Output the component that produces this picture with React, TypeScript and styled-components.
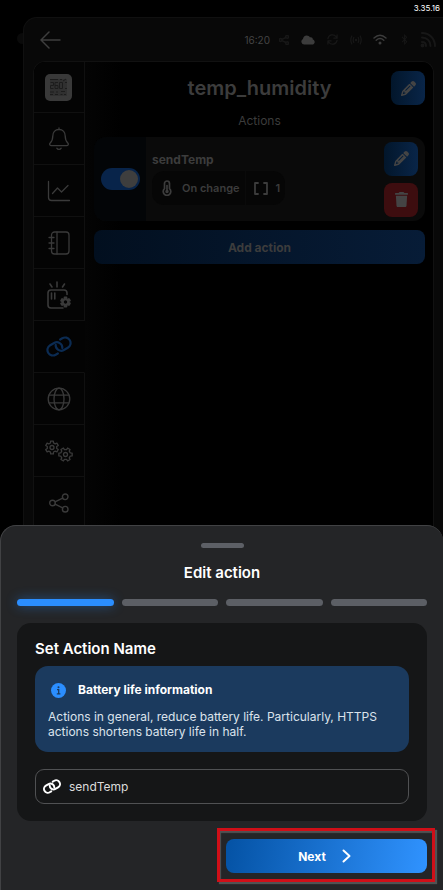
import React from "react";
import styled, { createGlobalStyle } from "styled-components";
import { FaTrash, FaBluetoothB, FaPencil } from "react-icons/fa6";

const GlobalStyle = createGlobalStyle`
  *, *::before, *::after { box-sizing: border-box; }
  body {
    margin: 0;
    background: #000;
    font-family: Inter, "Liberation Sans", sans-serif;
    font-size: 12px;
    overflow: hidden;
  }
  button, input { font: inherit; color: inherit; }
  button { cursor: pointer; }
  svg { display: block; flex: none; }
  h1, h2, h3, p, ol { margin: 0; padding: 0; }
`;

const Page = styled.div`
  position: relative;
  display: flex;
  flex-direction: column;
  height: 100vh;
  background: #000;
  overflow: hidden;
`;

const Version = styled.div`
  height: 17px;
  flex: none;
  padding-right: 3px;
  text-align: right;
  font-size: 8px;
  font-weight: 400;
  line-height: 17px;
  color: #fff;
`;

const Device = styled.div`
  position: relative;
  flex: 1;
  display: flex;
  flex-direction: column;
  margin-left: 23px;
  padding: 0 9px;
  background: #080808;
  border: solid #101010;
  border-width: 1px 0 0 1px;
  border-radius: 14px 0 0 0;
  color: #3c3c3c;
  &::before {
    content: "";
    position: absolute;
    left: -7px;
    top: 15px;
    width: 6px;
    height: 11px;
    border-radius: 6px 0 0 6px;
    background: #0a0a0a;
  }
`;

const TopBar = styled.header`
  display: flex;
  align-items: center;
  justify-content: space-between;
  height: 43px;
  flex: none;
  padding-left: 7px;
`;

const BackButton = styled.button`
  display: flex;
  padding: 0;
  border: 0;
  background: none;
  color: #3e3e3e;
`;

const Status = styled.div`
  display: flex;
  align-items: center;
  gap: 4px;
  font-size: 10px;
  font-weight: 400;
  color: #444;
  margin-right: -4px;
`;

const StatusIcon = styled.span<{ $on?: boolean }>`
  display: flex;
  justify-content: center;
  width: 20px;
  color: ${(p) => (p.$on ? "#3c3c3c" : "#171717")};
`;

const Panel = styled.div`
  flex: 1;
  display: flex;
  background: #000;
  border: solid #111;
  border-width: 1px 1px 0 1px;
  border-radius: 12px 12px 0 0;
  overflow: hidden;
`;

const SideBar = styled.nav`
  display: flex;
  flex-direction: column;
  width: 52px;
  flex: none;
  margin-left: -1px;
`;

const SideItem = styled.button<{ $active?: boolean }>`
  display: flex;
  align-items: center;
  justify-content: center;
  height: 52px;
  flex: none;
  padding: 0;
  border: solid #101010;
  border-width: 0 1px 1px 0;
  border-right-color: ${(p) => (p.$active ? "transparent" : "#101010")};
  background: ${(p) => (p.$active ? "#030303" : "#040404")};
  color: ${(p) => (p.$active ? "#0b2b52" : "#3a3a3a")};
  &:first-child {
    height: 51px;
  }
`;

const Main = styled.main`
  flex: 1;
  display: flex;
  flex-direction: column;
  padding: 9px 8px 0 9px;
  background: linear-gradient(90deg, #040404, #000 36px);
`;

const TitleRow = styled.div`
  display: grid;
  grid-template-columns: 34px 1fr 34px;
  align-items: center;
`;

const Title = styled.h1`
  grid-column: 2;
  text-align: center;
  font-size: 20px;
  line-height: 34px;
  font-weight: 600;
`;

const SubTitle = styled.p`
  margin: 7px 0 8px;
  text-align: center;
  font-size: 12px;
  line-height: 17px;
`;

const SquareButton = styled.button<{ $danger?: boolean }>`
  display: flex;
  align-items: center;
  justify-content: center;
  width: 34px;
  height: 34px;
  padding: 0;
  border: 0;
  border-radius: 8px;
  background: ${(p) =>
    p.$danger ? "#3d0d0f" : "linear-gradient(90deg, #02162b, #092548)"};
  color: #444;
`;

const ActionCard = styled.article`
  display: flex;
  height: 84px;
  border-radius: 12px;
  background: #0a0a0a;
  overflow: hidden;
`;

const ToggleCell = styled.label`
  display: flex;
  align-items: center;
  justify-content: center;
  width: 52px;
  background: #030507;
`;

const Toggle = styled.input`
  appearance: none;
  display: flex;
  align-items: center;
  justify-content: flex-end;
  width: 39px;
  height: 22px;
  margin: 0;
  padding: 2px;
  border-radius: 11px;
  background: #08244a;
  &::before {
    content: "";
    width: 18px;
    height: 18px;
    border-radius: 50%;
    background: #3e3e3e;
  }
  &:not(:checked) {
    justify-content: flex-start;
    background: #151515;
  }
`;

const ActionBody = styled.div`
  flex: 1;
  padding: 15px 6px 0;
`;

const ActionName = styled.h2`
  font-size: 12px;
  line-height: 16px;
  font-weight: 700;
`;

const Chips = styled.div`
  display: inline-flex;
  margin-top: 3px;
  border-radius: 12px;
  background: #060606;
  font-weight: 600;
  font-size: 11px;
`;

const Chip = styled.span`
  display: flex;
  align-items: center;
  gap: 10px;
  height: 34px;
  padding: 0 5px 0 10px;
  & + & {
    padding-left: 8px;
    gap: 8px;
    border-left: 1px solid #0a0a0a;
  }
`;

const CardButtons = styled.div`
  display: flex;
  flex-direction: column;
  justify-content: center;
  gap: 7px;
  padding-right: 7px;
`;

const AddButton = styled.button`
  height: 34px;
  margin-top: 9px;
  border: 0;
  border-radius: 8px;
  background: linear-gradient(90deg, #020f1f, #071c37);
  font-weight: 700;
  color: #3c3c3c;
`;

const Sheet = styled.section`
  position: absolute;
  left: 0;
  right: 0;
  bottom: 0;
  display: flex;
  flex-direction: column;
  padding: 17px 16px 8px;
  border: solid #414244;
  border-width: 1px 0 0 1px;
  border-radius: 16px 16px 0 0;
  background: #242527;
  color: #fff;
`;

const Handle = styled.div`
  align-self: center;
  width: 43px;
  height: 5px;
  border-radius: 3px;
  background: #5d6066;
`;

const SheetTitle = styled.h2`
  margin: 15px 0 16px;
  text-align: center;
  font-size: 15px;
  line-height: 20px;
  font-weight: 600;
`;

const Steps = styled.ol`
  display: grid;
  grid-template-columns: repeat(4, 1fr);
  gap: 8px;
  list-style: none;
`;

const Step = styled.li<{ $done?: boolean }>`
  height: 7px;
  border-radius: 4px;
  background: ${(p) => (p.$done ? "#2b8eff" : "#5c5f65")};
  box-shadow: ${(p) => (p.$done ? "0 0 12px rgba(43, 142, 255, 0.45)" : "none")};
`;

const FormCard = styled.div`
  display: flex;
  flex-direction: column;
  margin-top: 17px;
  padding: 16px 18px 17px;
  border-radius: 14px;
  background: #151617;
`;

const FormTitle = styled.h3`
  font-size: 15px;
  line-height: 20px;
  font-weight: 600;
`;

const Info = styled.div`
  margin: 7px 0 17px;
  padding: 14px 13px 13px;
  border-radius: 13px;
  background: #1b3a5e;
`;

const InfoHead = styled.div`
  display: flex;
  align-items: center;
  gap: 12px;
  padding-left: 3px;
  font-size: 12px;
  line-height: 20px;
  font-weight: 700;
`;

const InfoText = styled.p`
  margin-top: 9px;
  font-size: 12px;
  line-height: 15px;
  color: #dbe3ec;
`;

const Field = styled.label`
  display: flex;
  align-items: center;
  gap: 8px;
  height: 35px;
  padding: 0 8px 0 7px;
  border: 1px solid #505153;
  border-radius: 9px;
`;

const FieldInput = styled.input`
  flex: 1;
  min-width: 0;
  padding: 0;
  border: 0;
  outline: 0;
  background: none;
  font-size: 12px;
  color: #dcdcdc;
`;

const Highlight = styled.div`
  align-self: flex-end;
  margin: 7px -8px 0 0;
  padding: 8px 5px 6px 6px;
  border: 3px solid #d00f18;
  box-shadow: 2px 2px 1px #515253, inset 1px 2px 1px #515253;
`;

const NextButton = styled.button`
  display: flex;
  align-items: center;
  justify-content: center;
  gap: 16px;
  width: 201px;
  height: 34px;
  padding: 0 4px 0 0;
  border: 0;
  border-radius: 8px;
  background: linear-gradient(100deg, #0452a4, #3093ff);
  font-size: 12px;
  font-weight: 700;
  color: #fff;
`;

type IconProps = {
  w: number;
  h?: number;
  box: string;
  sw?: number;
  children: React.ReactNode;
};

const Stroke = ({ w, h = w, box, sw = 1.3, children }: IconProps) => (
  <svg
    width={w}
    height={h}
    viewBox={box}
    fill="none"
    stroke="currentColor"
    strokeWidth={sw}
    strokeLinecap="round"
    strokeLinejoin="round"
    aria-hidden="true"
  >
    {children}
  </svg>
);

const gearPath = (cx: number, cy: number, outer: number, inner: number, teeth: number, turn = 0) => {
  const points: string[] = [];
  const step = (Math.PI * 2) / teeth;
  for (let i = 0; i < teeth; i++) {
    const a = i * step + turn;
    [
      [inner, -0.3],
      [outer, -0.2],
      [outer, 0.2],
      [inner, 0.3],
    ].forEach(([r, f]) => {
      points.push(
        `${(cx + r * Math.cos(a + f * step)).toFixed(2)} ${(cy + r * Math.sin(a + f * step)).toFixed(2)}`
      );
    });
  }
  return `M${points.join("L")}Z`;
};

const chainHalf = "M-4.500 5.500H-7A5.500 5.500 0 0 1-7-5.500H-2.500A5.500 5.500 0 0 1 2.100 3";

const ChainIcon = ({ w, h, sw }: { w: number; h: number; sw: number }) => (
  <Stroke w={w} h={h} box="-13 -10.500 26 21" sw={sw}>
    <g transform="rotate(-30)">
      <path d={chainHalf} />
      <path d={chainHalf} transform="rotate(180)" />
    </g>
  </Stroke>
);

const DeviceThumb = () => (
  <svg width="27" height="27" viewBox="0 0 27 27" aria-hidden="true">
    <rect width="27" height="27" rx="5" fill="#393939" />
    <rect x="5" y="5" width="17" height="17" fill="#303030" />
    <g stroke="#1c1c1c" strokeWidth="1" fill="none">
      <path d="M5 5.500h8M15 5.500h2M18 7l3-2M5.500 8.500h3v3h-3v3h3M13 8.500h-3v6h3v-3h-3M14.500 8.500h3v6h-3zM20 8.500h2M20 14.500h2" />
      <path d="M5 18h4M11 18h2M16 17.500h4M5 20.500h3M10 20.500h3M15.500 20.500h2M19 20.500h2" />
    </g>
  </svg>
);

const BellIcon = () => (
  <Stroke w={22} h={24} box="0 0 22 24">
    <path d="M11 1v1.500M11 2.500C7 2.500 4.800 5.500 4.800 9c0 4-1 5.500-2.600 7-1 1-.6 2.600.8 2.600h16c1.400 0 1.800-1.600.8-2.600-1.600-1.500-2.600-3-2.600-7 0-3.500-2.200-6.500-6.200-6.500zM8.800 21.200c1 1.600 3.400 1.600 4.400 0" />
  </Stroke>
);

const ChartIcon = () => (
  <Stroke w={24} h={22} box="0 0 24 22">
    <path d="M1.500 1.500v16a3 3 0 0 0 3 3h18M5.500 13.500l5-5.500 4 4 6.500-6.500" />
  </Stroke>
);

const NotebookIcon = () => (
  <Stroke w={22} h={24} box="0 0 22 24">
    <rect x="3.500" y="1" width="17.500" height="22" rx="3" />
    <path d="M9 1v22M1 6.500h5M1 12h5M1 17.500h5" />
  </Stroke>
);

const DeviceGearIcon = () => (
  <Stroke w={24} h={28} box="0 0 24 28" sw={1.600}>
    <path d="M10 1v5M3 3l2 3M17.500 3l-2 3M20 13.500v-1.500a3 3 0 0 0-3-3H4a3 3 0 0 0-3 3v12a3 3 0 0 0 3 3h12M4.500 12v6M7.800 12v6" />
    <path d={gearPath(18.500, 21, 4.600, 3, 6, 0.520)} strokeWidth="1.800" />
    <circle cx="18.500" cy="21" r="2.600" strokeWidth="1.600" />
  </Stroke>
);

const GlobeIcon = () => (
  <Stroke w={24} box="0 0 24 24">
    <circle cx="12" cy="12" r="10.800" />
    <ellipse cx="12" cy="12" rx="5" ry="10.800" />
    <path d="M2 8.200h20M2 15.800h20" />
  </Stroke>
);

const GearsIcon = () => (
  <Stroke w={28} h={22} box="0 0 28 22" sw={1.300}>
    <path d={gearPath(7, 7.500, 6.600, 4.800, 6, 0.520)} />
    <circle cx="7" cy="7.500" r="2" />
    <path d={gearPath(20.500, 14.500, 6.800, 5, 6)} />
    <circle cx="20.500" cy="14.500" r="2" />
  </Stroke>
);

const ShareIcon = ({ size = 20, sw = 1.400 }: { size?: number; sw?: number }) => (
  <Stroke w={size} box="0 0 20 20" sw={sw}>
    <circle cx="3.500" cy="10" r="2.800" />
    <circle cx="16.200" cy="3.800" r="2.800" />
    <circle cx="16.200" cy="16.200" r="2.800" />
    <path d="M6 8.800l7.700-3.700M6 11.200l7.700 3.700" />
  </Stroke>
);

const BackIcon = () => (
  <Stroke w={21} h={18} box="0 0 21 18" sw={1.500}>
    <path d="M20 9H1M9 1L1 9l8 8" />
  </Stroke>
);

const CloudIcon = () => (
  <svg width="14" height="10" viewBox="0 0 14 10" fill="currentColor" aria-hidden="true">
    <path d="M3.200 9.600A2.900 2.900 0 0 1 2 4.100C2 1.800 3.700.4 5.700.4c1.500 0 2.600.7 3.200 1.900 1.800-.4 3 .7 2.900 2.200 1.200.3 1.900 1.300 1.900 2.500 0 1.500-1.100 2.600-2.600 2.600z" />
  </svg>
);

const SyncIcon = () => (
  <Stroke w={11} box="0 0 12 12" sw={1.400}>
    <path d="M1 5a5 5 0 0 1 9-2M11 1v3.500H7.500M11 7a5 5 0 0 1-9 2M1 11V7.500h3.500" />
  </Stroke>
);

const BroadcastIcon = () => (
  <Stroke w={12} h={10} box="0 0 12 10" sw={1.200}>
    <path d="M1.800 1Q-.2 5 1.800 9M3.800 2.500q-1.200 2.500 0 5M10.200 1q2 4 0 8M8.200 2.500q1.200 2.500 0 5" />
    <circle cx="6" cy="5" r=".6" />
  </Stroke>
);

const WifiIcon = () => (
  <Stroke w={14} h={11} box="0 0 14 11" sw={1.400}>
    <path d="M1 4q6-5.500 12 0M3.200 6.300q3.800-3.400 7.600 0" />
    <circle cx="7" cy="9" r=".8" fill="currentColor" />
  </Stroke>
);

const RssIcon = () => (
  <Stroke w={17} box="0 0 17 17" sw={2}>
    <path d="M2 2c7.500 0 13 5.500 13 13M2 6.500c5 0 8.500 3.500 8.500 8.500M2 11c2.500 0 4 1.500 4 4" />
    <circle cx="2.500" cy="14.500" r="1" />
  </Stroke>
);

const ThermoIcon = () => (
  <Stroke w={10} h={16} box="0 0 10 16" sw={1.700}>
    <path d="M2.500 3.500a2.500 2.500 0 0 1 5 0v5.200a3.800 3.800 0 1 1-5 0z" />
    <path d="M5 5.500V11" />
    <circle cx="5" cy="11.500" r=".9" />
  </Stroke>
);

const BracketsIcon = () => (
  <Stroke w={14} h={13} box="0 0 14 13" sw={1.800}>
    <path d="M4 1H1v11h3M10 1h3v11h-3" />
  </Stroke>
);

const InfoIcon = () => (
  <svg width="15" height="15" viewBox="0 0 15 15" aria-hidden="true">
    <circle cx="7.500" cy="7.500" r="7.500" fill="#2b8eff" />
    <path d="M6 6.700h1.700v4M5.800 10.900h3.600" fill="none" stroke="#1b3a5e" strokeWidth="1.300" />
    <circle cx="7.500" cy="4.300" r="1" fill="#1b3a5e" />
  </svg>
);

const ChevronIcon = () => (
  <Stroke w={9} h={14} box="0 0 9 14" sw={2}>
    <path d="M1.500 1.500L7.500 7l-6 5.500" />
  </Stroke>
);

const sections = [
  { name: "Device", icon: <DeviceThumb /> },
  { name: "Alerts", icon: <BellIcon /> },
  { name: "Charts", icon: <ChartIcon /> },
  { name: "Log", icon: <NotebookIcon /> },
  { name: "Device settings", icon: <DeviceGearIcon /> },
  { name: "Actions", icon: <ChainIcon w={26} h={21} sw={2.200} />, active: true },
  { name: "Network", icon: <GlobeIcon /> },
  { name: "Settings", icon: <GearsIcon /> },
  { name: "Share", icon: <ShareIcon /> },
];

const statuses = [
  { name: "share", icon: <ShareIcon size={10} sw={3} /> },
  { name: "cloud", icon: <CloudIcon />, on: true },
  { name: "sync", icon: <SyncIcon /> },
  { name: "broadcast", icon: <BroadcastIcon /> },
  { name: "wifi", icon: <WifiIcon />, on: true },
  { name: "bluetooth", icon: <FaBluetoothB size={11} /> },
  { name: "signal", icon: <RssIcon /> },
];

export default function App() {
  return (
    <>
      <GlobalStyle />
      <Page>
        <Version>3.35.16</Version>
        <Device>
          <TopBar>
            <BackButton aria-label="Back">
              <BackIcon />
            </BackButton>
            <Status>
              <span>16:20</span>
              {statuses.map((s) => (
                <StatusIcon key={s.name} $on={s.on}>
                  {s.icon}
                </StatusIcon>
              ))}
            </Status>
          </TopBar>
          <Panel>
            <SideBar>
              {sections.map((s) => (
                <SideItem key={s.name} $active={s.active} aria-label={s.name}>
                  {s.icon}
                </SideItem>
              ))}
            </SideBar>
            <Main>
              <TitleRow>
                <Title>temp_humidity</Title>
                <SquareButton aria-label="Edit name">
                  <FaPencil size={15} />
                </SquareButton>
              </TitleRow>
              <SubTitle>Actions</SubTitle>
              <ActionCard>
                <ToggleCell>
                  <Toggle type="checkbox" defaultChecked aria-label="Enable sendTemp" />
                </ToggleCell>
                <ActionBody>
                  <ActionName>sendTemp</ActionName>
                  <Chips>
                    <Chip>
                      <ThermoIcon />
                      On change
                    </Chip>
                    <Chip>
                      <BracketsIcon />1
                    </Chip>
                  </Chips>
                </ActionBody>
                <CardButtons>
                  <SquareButton aria-label="Edit action">
                    <FaPencil size={15} />
                  </SquareButton>
                  <SquareButton $danger aria-label="Delete action">
                    <FaTrash size={15} />
                  </SquareButton>
                </CardButtons>
              </ActionCard>
              <AddButton>Add action</AddButton>
            </Main>
          </Panel>
        </Device>
        <Sheet role="dialog" aria-labelledby="sheet-title">
          <Handle />
          <SheetTitle id="sheet-title">Edit action</SheetTitle>
          <Steps>
            <Step $done />
            <Step />
            <Step />
            <Step />
          </Steps>
          <FormCard>
            <FormTitle>Set Action Name</FormTitle>
            <Info>
              <InfoHead>
                <InfoIcon />
                Battery life information
              </InfoHead>
              <InfoText>
                Actions in general, reduce battery life. Particularly, HTTPS actions shortens battery
                life in half.
              </InfoText>
            </Info>
            <Field>
              <ChainIcon w={18} h={15} sw={2.800} />
              <FieldInput type="text" defaultValue="sendTemp" aria-label="Action name" />
            </Field>
          </FormCard>
          <Highlight>
            <NextButton>
              Next
              <ChevronIcon />
            </NextButton>
          </Highlight>
        </Sheet>
      </Page>
    </>
  );
}
